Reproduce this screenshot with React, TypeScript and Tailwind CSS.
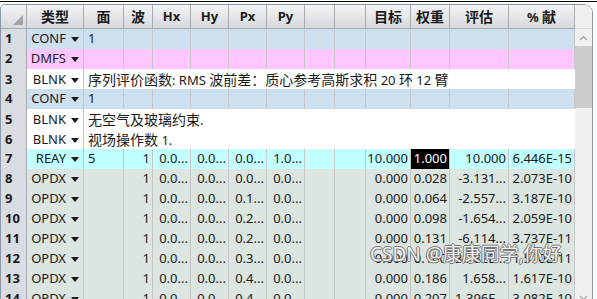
import React from "react";

const FONT = { fontFamily: '"Noto Sans", "Noto Sans CJK SC", sans-serif' };

const COLS =
  "grid grid-cols-[26px_57px_40px_29px_38px_38px_38px_38px_30px_31px_45px_39px_59px_66px]";

const HEAD = ["类型", "面", "波", "Hx", "Hy", "Px", "Py", "", "", "目标", "权重", "评估", "% 献"];

type Row =
  | { kind: "span"; type: string; bg: string; text: string }
  | { kind: "cells"; type: string; bg: string; cells: string[]; sel?: number };

const e = "";
const opdx = (px: string, w: string, ev: string, pc: string): Row => ({
  kind: "cells",
  type: "OPDX",
  bg: "bg-[#dce5e0]",
  cells: [e, "1", "0.0...", "0.0...", px, "0.0...", e, e, "0.000", w, ev, pc],
});

const ROWS: Row[] = [
  { kind: "cells", type: "CONF", bg: "bg-[#cde0f0]", cells: ["1", e, e, e, e, e, e, e, e, e, e, e] },
  { kind: "cells", type: "DMFS", bg: "bg-[#ffc6ff]", cells: [e, e, e, e, e, e, e, e, e, e, e, e] },
  { kind: "span", type: "BLNK", bg: "bg-white", text: "序列评价函数: RMS 波前差：质心参考高斯求积 20 环 12 臂" },
  { kind: "cells", type: "CONF", bg: "bg-[#cde0f0]", cells: ["1", e, e, e, e, e, e, e, e, e, e, e] },
  { kind: "span", type: "BLNK", bg: "bg-white", text: "无空气及玻璃约束." },
  { kind: "span", type: "BLNK", bg: "bg-white", text: "视场操作数 1." },
  {
    kind: "cells",
    type: "REAY",
    bg: "bg-[#c2ffff]",
    cells: ["5", "1", "0.0...", "0.0...", "0.0...", "1.0...", e, e, "10.000", "1.000", "10.000", "6.446E-15"],
    sel: 9,
  },
  opdx("0.0...", "0.028", "-3.131...", "2.073E-10"),
  opdx("0.1...", "0.064", "-2.557...", "3.187E-10"),
  opdx("0.2...", "0.098", "-1.654...", "2.059E-10"),
  opdx("0.2...", "0.131", "-6.114...", "3.737E-11"),
  opdx("0.3...", "0.160", "3.582E...", "1.570E-11"),
  opdx("0.4...", "0.186", "1.658...", "1.617E-10"),
  opdx("0.4...", "0.207", "1.396E...", "3.082E-10"),
];

// CJK glyphs sit a touch larger than the latin text in the source
function Mixed({ text }: { text: string }) {
  const parts = text.split(/([\u3000-\u9fff\uff00-\uffef]+)/);
  return (
    <span>
      {parts.map((p, i) =>
        /[\u3000-\u9fff\uff00-\uffef]/.test(p) ? (
          <span key={i} className="text-[14px]">
            {p}
          </span>
        ) : (
          p
        )
      )}
    </span>
  );
}

function TypeCell({ type, bg }: { type: string; bg: string }) {
  return (
    <div className={`${bg} flex items-center justify-end gap-[5px] border-r border-b border-[#c6c6c6] pr-[4px] text-[13px] text-[#1a1a1a]`}>
      <span>{type}</span>
      <svg width="8" height="5" viewBox="0 0 8 5" className="mt-px">
        <path d="M0 0 H8 L4 5 Z" fill="#1a1a1a" />
      </svg>
    </div>
  );
}

function RowNum({ n }: { n: number }) {
  return (
    <div className="flex items-center border-r border-b border-[#a9adb3] bg-[#d9dce0] pl-[4px] text-[13px] font-bold text-[#1a1a1a]">
      {n}
    </div>
  );
}

export default function App() {
  return (
    <div className="relative h-[299px] w-[597px] overflow-hidden bg-white" style={FONT}>
      <div className="mt-px h-px w-full bg-black" />
      <div className="mt-[2px] flex w-[593px] overflow-hidden rounded-tl-[5px] rounded-tr-[9px] border border-b-0 border-[#8a97a8]">
        <div className="w-[574px] shrink-0">
          {/* header */}
          <div className={`${COLS} h-[24px]`}>
            <div className="relative border-r border-b border-[#a9adb3] bg-gradient-to-b from-[#f3f4f5] to-[#d6d9dd]">
              <div className="absolute right-[3px] bottom-[3px] h-0 w-0 border-b-[10px] border-l-[10px] border-b-[#9ea3a9] border-l-transparent" />
            </div>
            {HEAD.map((h, i) => (
              <div
                key={i}
                className="flex items-center justify-center border-r border-b border-[#a9adb3] bg-gradient-to-b from-[#f3f4f5] to-[#d6d9dd] text-[13px] font-bold whitespace-nowrap text-[#1a1a1a]"
              >
                <Mixed text={h} />
              </div>
            ))}
          </div>
          {ROWS.map((r, i) => (
            <div key={i} className={`${COLS} h-[20px]`}>
              <RowNum n={i + 1} />
              <TypeCell type={r.type} bg={r.bg} />
              {r.kind === "span" ? (
                <div className={`${r.bg} col-span-12 flex items-center border-b border-[#c6c6c6] pl-[4px] text-[13px] whitespace-nowrap text-[#1a1a1a]`}>
                  <Mixed text={r.text} />
                </div>
              ) : (
                r.cells.map((c, j) => (
                  <div
                    key={j}
                    className={`flex items-center overflow-hidden border-r border-b border-[#c6c6c6] text-[13px] whitespace-nowrap ${
                      r.sel === j ? "bg-black text-white" : `${r.bg} text-[#1a1a1a]`
                    } ${j === 0 ? "justify-start pl-[4px]" : "justify-end pr-[2px]"}`}
                  >
                    {c}
                  </div>
                ))
              )}
            </div>
          ))}
        </div>
        {/* scrollbar */}
        <div className="flex w-[17px] shrink-0 flex-col bg-[#f0f0f0]">
          <div className="h-[24px] border-b border-[#d6d9dd] bg-[#f0f0f0]" />
          <div className="flex h-[17px] items-center justify-center">
            <svg width="9" height="6" viewBox="0 0 9 6">
              <path d="M1 5 L4.5 1.5 L8 5" fill="none" stroke="#a0a0a0" strokeWidth="1.2" />
            </svg>
          </div>
          <div className="h-[62px] bg-[#cdcdcd]" />
          <div className="flex-1" />
          <div className="flex h-[17px] items-start justify-center pt-[3px]">
            <svg width="9" height="6" viewBox="0 0 9 6">
              <path d="M1 1 L4.5 4.5 L8 1" fill="none" stroke="#a0a0a0" strokeWidth="1.2" />
            </svg>
          </div>
        </div>
      </div>
      {/* watermark */}
      <div
        className="pointer-events-none absolute top-[240px] left-[370px] text-[19px] whitespace-nowrap text-white/90"
        style={{ textShadow: "1px 0 0 #777, -1px 0 0 #777, 0 1px 0 #777, 0 -1px 0 #777" }}
      >
        CSDN @康康同学,你好
      </div>
    </div>
  );
}
